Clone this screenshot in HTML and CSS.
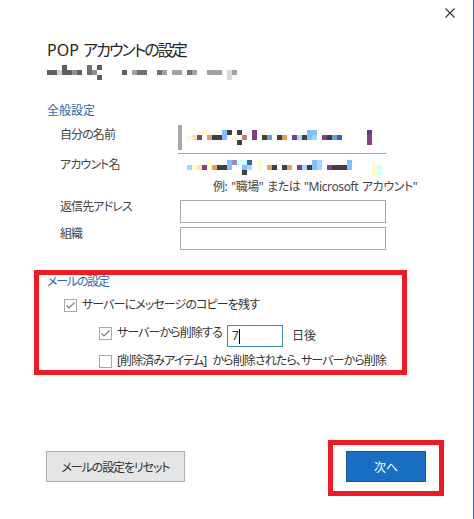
FILE: index.html
```html
<!DOCTYPE html>
<html lang="ja">
<head>
<meta charset="utf-8">
<title>POP アカウントの設定</title>
<link rel="stylesheet" href="styles.css">
</head>
<body>
<div class="dialog">
  <div class="topbar">
    <button class="close" aria-label="閉じる">
      <svg width="10" height="10" viewBox="0 0 10 10"><path d="M0.5 0.5 L9.5 9.5 M9.5 0.5 L0.5 9.5" stroke="#333" stroke-width="1.1" fill="none"/></svg>
    </button>
  </div>
  <div class="content">
    <h1 class="title">POP <span class="title-ja">アカウントの設定</span></h1>
    <svg class="email" width="192" height="15" viewBox="52 65 192 15">
      <rect x="52" y="70" width="10" height="5" fill="#606060"/>
      <rect x="62" y="70" width="5" height="5" fill="#d0d0d0"/>
      <rect x="67" y="65" width="5" height="10" fill="#606060"/>
      <rect x="72" y="70" width="5" height="5" fill="#606060"/>
      <rect x="77" y="70" width="5" height="5" fill="#909090"/>
      <rect x="82" y="70" width="5" height="5" fill="#606060"/>
      <rect x="92" y="65" width="5" height="10" fill="#707070"/>
      <rect x="97" y="70" width="5" height="5" fill="#909090"/>
      <rect x="102" y="65" width="5" height="5" fill="#606060"/>
      <rect x="102" y="75" width="5" height="5" fill="#606060"/>
      <rect x="127" y="70" width="5" height="5" fill="#606060"/>
      <rect x="137" y="70" width="5" height="5" fill="#a0a0a0"/>
      <rect x="142" y="70" width="10" height="5" fill="#707070"/>
      <rect x="162" y="70" width="5" height="5" fill="#707070"/>
      <rect x="167" y="70" width="5" height="5" fill="#a0a0a0"/>
      <rect x="177" y="70" width="10" height="5" fill="#a0a0a0"/>
      <rect x="192" y="70" width="5" height="5" fill="#707070"/>
      <rect x="197" y="70" width="5" height="5" fill="#a0a0a0"/>
      <rect x="212" y="70" width="15" height="5" fill="#a0a0a0"/>
      <rect x="232" y="70" width="5" height="10" fill="#d8d8d8"/>
      <rect x="237" y="70" width="5" height="5" fill="#a0a0a0"/>
    </svg>

    <div class="section-title general">全般設定</div>

    <div class="form">
      <div class="label">自分の名前</div>
      <div class="field name-field">
        <svg width="210" height="30" viewBox="178 124 210 30">
          <rect x="178" y="125" width="4" height="25" fill="#a8a8a8"/>
          <rect x="187" y="135" width="5" height="5" fill="#fff8d0"/>
          <rect x="192" y="135" width="5" height="5" fill="#ffe0a8"/>
          <rect x="197" y="135" width="5" height="5" fill="#7b4088"/>
          <rect x="202" y="130" width="5" height="5" fill="#fff8d0"/>
          <rect x="207" y="135" width="5" height="5" fill="#e0a060"/>
          <rect x="212" y="135" width="10" height="5" fill="#404040"/>
          <rect x="222" y="130" width="5" height="10" fill="#80c0ff"/>
          <rect x="227" y="130" width="5" height="5" fill="#404040"/>
          <rect x="232" y="135" width="5" height="5" fill="#fff8d0"/>
          <rect x="237" y="130" width="5" height="5" fill="#404040"/>
          <rect x="237" y="140" width="5" height="5" fill="#404040"/>
          <rect x="242" y="135" width="5" height="5" fill="#c08080"/>
          <rect x="252" y="130" width="5" height="10" fill="#7b4088"/>
          <rect x="262" y="135" width="5" height="5" fill="#404040"/>
          <rect x="267" y="135" width="5" height="5" fill="#60a0e0"/>
          <rect x="277" y="135" width="5" height="5" fill="#404040"/>
          <rect x="282" y="135" width="5" height="5" fill="#e0a060"/>
          <rect x="292" y="135" width="5" height="5" fill="#7b4088"/>
          <rect x="297" y="135" width="5" height="5" fill="#a0d8ff"/>
          <rect x="302" y="135" width="5" height="5" fill="#404040"/>
          <rect x="307" y="130" width="10" height="5" fill="#80c0ff"/>
          <rect x="307" y="135" width="5" height="5" fill="#80c0ff"/>
          <rect x="312" y="135" width="5" height="5" fill="#a0d8ff"/>
          <rect x="322" y="135" width="5" height="5" fill="#7b4088"/>
          <rect x="327" y="135" width="5" height="5" fill="#404040"/>
          <rect x="332" y="135" width="5" height="5" fill="#60a0e0"/>
          <rect x="337" y="135" width="5" height="5" fill="#4060a0"/>
          <rect x="367" y="130" width="5" height="5" fill="#604088"/>
          <rect x="367" y="135" width="5" height="10" fill="#8b4088"/>
        </svg>
      </div>

      <div class="label">アカウント名</div>
      <div class="field account-field">
        <svg width="210" height="24" viewBox="178 154 210 24">
          <rect x="187" y="165" width="5" height="5" fill="#a0d8ff"/>
          <rect x="192" y="165" width="5" height="5" fill="#fff8d0"/>
          <rect x="197" y="165" width="5" height="5" fill="#ffe0a8"/>
          <rect x="202" y="165" width="5" height="5" fill="#7b4088"/>
          <rect x="207" y="160" width="5" height="10" fill="#fff8d0"/>
          <rect x="212" y="165" width="5" height="5" fill="#e0a060"/>
          <rect x="217" y="165" width="10" height="5" fill="#404040"/>
          <rect x="227" y="160" width="5" height="10" fill="#80c0ff"/>
          <rect x="232" y="160" width="5" height="5" fill="#a090b0"/>
          <rect x="237" y="160" width="5" height="5" fill="#d0ffff"/>
          <rect x="242" y="160" width="5" height="5" fill="#d0ffff"/>
          <rect x="242" y="165" width="5" height="5" fill="#80c0ff"/>
          <rect x="242" y="170" width="5" height="5" fill="#404040"/>
          <rect x="247" y="160" width="5" height="5" fill="#4060a0"/>
          <rect x="247" y="165" width="5" height="5" fill="#a0d8ff"/>
          <rect x="257" y="160" width="5" height="10" fill="#fff8d0"/>
          <rect x="267" y="165" width="5" height="5" fill="#e0a060"/>
          <rect x="272" y="165" width="5" height="5" fill="#404040"/>
          <rect x="282" y="165" width="5" height="5" fill="#404040"/>
          <rect x="287" y="165" width="5" height="5" fill="#e0a060"/>
          <rect x="297" y="165" width="5" height="5" fill="#7b4088"/>
          <rect x="302" y="165" width="5" height="5" fill="#a0d8ff"/>
          <rect x="307" y="165" width="5" height="5" fill="#404040"/>
          <rect x="312" y="160" width="5" height="10" fill="#80c0ff"/>
          <rect x="317" y="160" width="5" height="10" fill="#a0d8ff"/>
          <rect x="327" y="165" width="5" height="5" fill="#7b4088"/>
          <rect x="332" y="165" width="15" height="5" fill="#404040"/>
          <rect x="347" y="160" width="5" height="10" fill="#80c0ff"/>
          <rect x="372" y="165" width="5" height="10" fill="#fff8d0"/>
          <rect x="377" y="165" width="5" height="10" fill="#d0ffff"/>
        </svg>
      </div>

      <div class="label"></div>
      <div class="hint">例: "職場" または "Microsoft アカウント"</div>

      <div class="label">返信先アドレス</div>
      <div class="textbox"></div>

      <div class="label">組織</div>
      <div class="textbox"></div>
    </div>

    <div class="section-title mail">メールの設定</div>

    <div class="check-row level1">
      <span class="checkbox checked"><svg width="11" height="11" viewBox="0 0 11 11"><path d="M1.5 5.5 L4 8 L9.5 2.5" stroke="#7a7a7a" stroke-width="1.2" fill="none"/></svg></span>
      <span class="check-text">サーバーにメッセージのコピーを残す</span>
    </div>

    <div class="check-row level2 delete-row">
      <span class="check-group">
        <span class="checkbox checked"><svg width="11" height="11" viewBox="0 0 11 11"><path d="M1.5 5.5 L4 8 L9.5 2.5" stroke="#7a7a7a" stroke-width="1.2" fill="none"/></svg></span>
        <span class="check-text">サーバーから削除する</span>
      </span>
      <span class="days-box"><span class="days-value">7</span><span class="caret"></span></span>
      <span class="days-unit">日後</span>
    </div>

    <div class="check-row level2">
      <span class="checkbox"></span>
      <span class="check-text">[削除済みアイテム] から削除されたら、サーバーから削除</span>
    </div>

    <div class="footer">
      <button class="btn btn-reset">メールの設定をリセット</button>
      <button class="btn btn-next">次へ</button>
    </div>
  </div>

  <div class="mark mark-mail"></div>
  <div class="mark mark-next"></div>
</div>
</body>
</html>
```

FILE: styles.css
```css
* { box-sizing: border-box; }

html, body {
  margin: 0;
  padding: 0;
  background: #ffffff;
}

body {
  font-family: "Noto Sans", "Noto Sans CJK JP", sans-serif;
  font-size: 12px;
  color: #444444;
  font-feature-settings: "palt";
}

.dialog {
  position: relative;
  width: 474px;
  height: 519px;
  border-right: 1px solid #2c6dc4;
  background: #ffffff;
  overflow: hidden;
}

.topbar {
  height: 26px;
  display: flex;
  justify-content: flex-end;
  padding: 8px 18px 0 0;
}

.close {
  width: 10px;
  height: 10px;
  padding: 0;
  margin: 0;
  border: none;
  background: transparent;
  display: block;
}
.close svg { display: block; }

.content {
  padding-left: 47px;
}

.title {
  margin: 12px 0 0 0;
  font-size: 16px;
  font-weight: normal;
  line-height: 24px;
  color: #262626;
  white-space: nowrap;
}
.title-ja {
  letter-spacing: -1.9px;
}

.email {
  display: block;
  margin-top: 3px;
}

.section-title {
  font-size: 12px;
  line-height: 18px;
  color: #2f69ad;
}
.section-title.general { margin-top: 22px; }
.section-title.mail {
  margin-top: 23px;
  letter-spacing: -1.2px;
}

.form {
  display: grid;
  grid-template-columns: 120px 206px;
  margin-left: 13px;
  margin-top: 4px;
}

.label {
  line-height: 16px;
  padding-top: 3px;
  color: #444444;
  white-space: nowrap;
  letter-spacing: -0.9px;
}

.field svg { display: block; }

.name-field {
  height: 30px;
  margin-left: -2px;
  position: relative;
  border-bottom: 1px solid #a6a6a6;
  width: 208px;
}
.name-field svg { position: absolute; left: 0; top: 0; }

.account-field {
  height: 24px;
  margin-left: -2px;
}

.hint {
  line-height: 18px;
  padding-left: 33px;
  white-space: nowrap;
  letter-spacing: -0.4px;
  word-spacing: 1px;
  color: #444444;
}

.textbox {
  height: 23px;
  margin-top: 4px;
  border: 1px solid #a8a8a8;
  background: #ffffff;
}

.check-row {
  display: flex;
  align-items: center;
  line-height: 18px;
  white-space: nowrap;
  color: #333333;
}
.check-text {
  letter-spacing: -0.9px;
  word-spacing: 4px;
}
.level1 { margin-left: 17px; margin-top: 5px; }
.level2 { margin-left: 52px; }

.delete-row {
  align-items: flex-start;
  margin-top: 10px;
}
.delete-row + .check-row { margin-top: 5px; }

.check-group {
  display: flex;
  align-items: center;
  width: 128px;
}

.checkbox {
  width: 13px;
  height: 13px;
  border: 1px solid #a9a9a9;
  background: #ffffff;
  display: inline-flex;
  align-items: center;
  justify-content: center;
  margin-right: 5px;
  flex: none;
}
.checkbox svg { display: block; }

.days-box {
  width: 56px;
  height: 22px;
  margin-top: 1px;
  border: 1px solid #3b86d0;
  display: flex;
  align-items: center;
  padding-left: 4px;
  color: #333333;
  font-size: 12px;
}
.caret {
  width: 1px;
  height: 15px;
  background: #000000;
}

.days-unit {
  margin-left: 9px;
  margin-top: 3px;
  color: #333333;
}

.footer {
  display: flex;
  margin-top: 81px;
  margin-left: -1px;
}

.btn {
  height: 31px;
  font-family: inherit;
  font-size: 12px;
  font-feature-settings: "palt";
  padding: 0;
  cursor: default;
}

.btn-reset {
  width: 139px;
  background: #e5e5e5;
  border: 1px solid #adadad;
  color: #333333;
  letter-spacing: -1.1px;
}

.btn-next {
  width: 80px;
  margin-left: 161px;
  background: #1a6ec1;
  border: 1px solid #1059a3;
  color: #ffffff;
}

.mark {
  position: absolute;
  border: 5px solid #ed1c24;
  pointer-events: none;
}
.mark-mail {
  left: 34px;
  top: 270px;
  width: 373px;
  height: 105px;
}
.mark-next {
  left: 328px;
  top: 440px;
  width: 116px;
  height: 56px;
}
```
